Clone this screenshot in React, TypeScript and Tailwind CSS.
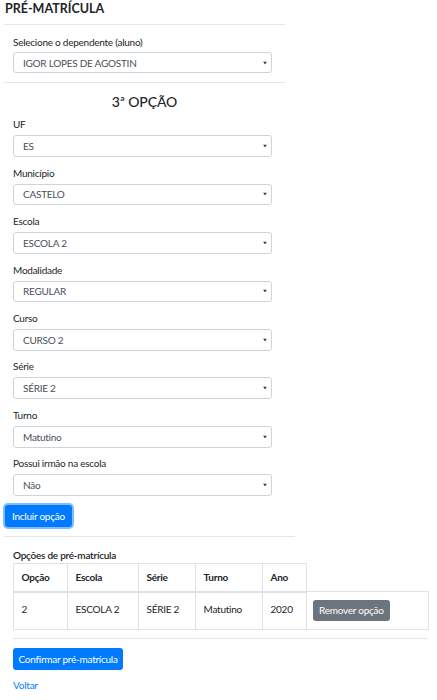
import React from "react";

const fields: [string, string][] = [
  ["UF", "ES"],
  ["Município", "CASTELO"],
  ["Escola", "ESCOLA 2"],
  ["Modalidade", "REGULAR"],
  ["Curso", "CURSO 2"],
  ["Série", "SÉRIE 2"],
  ["Turno", "Matutino"],
  ["Possui irmão na escola", "Não"],
];

function FakeSelect({ value }: { value: string }) {
  return (
    <div className="relative flex h-[21.7px] w-[258.5px] items-center rounded-[3px] border border-[#ced4da] bg-white pl-[9px] text-[#495057]">
      <span>{value}</span>
      <svg
        className="absolute right-[4px] top-1/2 -translate-y-1/2"
        width="4"
        height="3"
        viewBox="0 0 4 3"
      >
        <path d="M0 0h4L2 3z" fill="#343a40" />
      </svg>
    </div>
  );
}

export default function App() {
  return (
    <div className="h-[700px] w-[437px] bg-white font-['Lato',sans-serif] text-[10px] leading-[16px] tracking-[-0.25px] text-[#212529]">
      <div className="w-[285px] pl-[4px]">
        <h1 className="pl-[1px] pt-[1px] text-[12.5px] font-bold leading-[16px] tracking-normal">PRÉ-MATRÍCULA</h1>
        <hr className="mt-[7px] border-[#e6e6e6]" />
        <div className="px-[9px] pt-[8.7px]">
          <label className="block leading-[16px]">Selecione o dependente (aluno)</label>
          <div className="mt-[2px]">
            <FakeSelect value="IGOR LOPES DE AGOSTIN" />
          </div>
        </div>
        <hr className="mt-[8.4px] border-[#e6e6e6]" />
        <div className="px-[9px]">
          <h2 className="mt-[8px] text-center text-[14px] font-medium leading-[22px] tracking-[-0.1px]">3ª OPÇÃO</h2>
          <div className="mt-[3.3px]">
            {fields.map(([label, value]) => (
              <div key={label} className="mb-[7.8px]">
                <label className="mb-[3px] block leading-[16px]">{label}</label>
                <FakeSelect value={value} />
              </div>
            ))}
          </div>
        </div>
        <button
          type="button"
          className="ml-[1px] mt-[1.5px] h-[21.7px] rounded-[3px] bg-[#007bff] px-[7px] text-white shadow-[0_0_0_2px_rgba(0,123,255,0.5)]"
        >
          Incluir opção
        </button>
      </div>
      <hr className="ml-[4px] mt-[9px] w-[291px] border-[#e6e6e6]" />
      <div className="w-[428px] pl-[13px]">
        <p className="mt-[10px] font-semibold leading-[16px]">Opções de pré-matrícula</p>
        <table className="w-[415px] table-fixed border-collapse text-left">
          <colgroup>
            <col className="w-[54px]" />
            <col className="w-[71px]" />
            <col className="w-[57px]" />
            <col className="w-[67px]" />
            <col className="w-[44px]" />
            <col className="w-[122px]" />
          </colgroup>
          <thead>
            <tr>
              {["Opção", "Escola", "Série", "Turno", "Ano"].map((h) => (
                <th
                  key={h}
                  className="h-[28px] border border-b-2 border-[#dee2e6] px-[7.5px] align-middle font-bold"
                >
                  {h}
                </th>
              ))}
            </tr>
          </thead>
          <tbody>
            <tr>
              {["2", "ESCOLA 2", "SÉRIE 2", "Matutino", "2020"].map((c) => (
                <td key={c} className="h-[37px] border border-[#dee2e6] px-[7.5px] py-[8px] align-top">
                  {c}
                </td>
              ))}
              <td className="border border-[#dee2e6] px-[6px] py-[7.5px] align-top">
                <button
                  type="button"
                  className="h-[21.7px] rounded-[3px] bg-[#6c757d] px-[6px] text-white"
                >
                  Remover opção
                </button>
              </td>
            </tr>
          </tbody>
        </table>
        <hr className="mt-[8px] border-[#e6e6e6]" />
        <button
          type="button"
          className="mt-[9px] h-[21.7px] rounded-[3px] bg-[#007bff] px-[5.5px] text-white"
        >
          Confirmar pré-matrícula
        </button>
        <a href="#" className="mt-[7px] block leading-[16px] text-[#007bff]">
          Voltar
        </a>
      </div>
    </div>
  );
}
